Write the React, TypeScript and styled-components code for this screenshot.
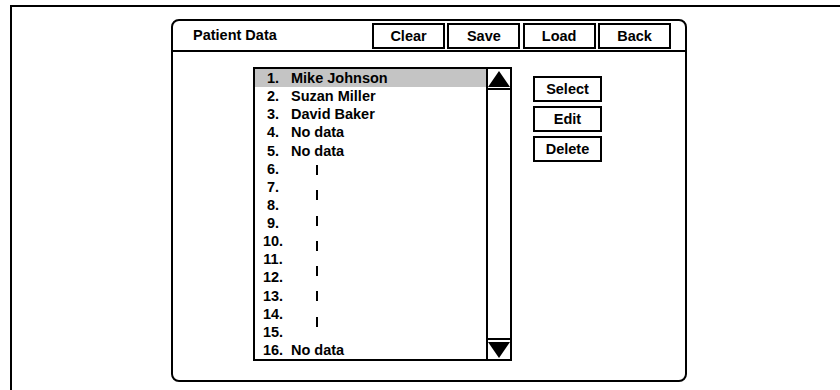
import React from 'react';
import styled, { createGlobalStyle } from 'styled-components';

const GlobalStyle = createGlobalStyle`
  html, body {
    margin: 0;
    padding: 0;
    background: #fff;
    overflow: hidden;
  }
  body {
    font-family: "Liberation Sans", Arial, sans-serif;
    color: #000;
  }
`;

/* outer frame: only top and left lines are visible */
const Frame = styled.div`
  box-sizing: border-box;
  margin: 5px 0 0 10px;
  height: 385px;
  border-top: 2px solid #000;
  border-left: 2px solid #000;
  padding: 12px 0 0 159px;
`;

const Panel = styled.div`
  box-sizing: border-box;
  width: 516px;
  height: 363px;
  border: 2px solid #000;
  border-radius: 8px;
  display: flex;
  flex-direction: column;
`;

const Header = styled.div`
  box-sizing: border-box;
  height: 31px;
  border-bottom: 2px solid #000;
  display: flex;
  align-items: center;
  padding: 0 14px 0 20px;
`;

const Title = styled.div`
  flex: 1;
  font-weight: bold;
  font-size: 14.5px;
  margin-top: -1px;
`;

const ButtonGroup = styled.div`
  display: flex;
  gap: 2.33px;
`;

const Button = styled.button<{ $w: number }>`
  box-sizing: border-box;
  width: ${(p) => p.$w}px;
  height: 26px;
  border: 2px solid #000;
  border-radius: 0;
  background: #fff;
  padding: 0;
  font-family: "Liberation Sans", Arial, sans-serif;
  font-weight: bold;
  font-size: 14.5px;
  color: #000;
`;

const Body = styled.div`
  display: flex;
  align-items: flex-start;
  padding: 15px 0 0 80px;
`;

const List = styled.div`
  box-sizing: border-box;
  position: relative;
  width: 259px;
  height: 294px;
  border: 2px solid #000;
  display: flex;
`;

const Rows = styled.div`
  flex: 1;
  display: flex;
  flex-direction: column;
`;

const Row = styled.div<{ $selected?: boolean }>`
  flex: 1;
  display: flex;
  align-items: center;
  padding-left: 3px;
  font-weight: bold;
  font-size: 14.5px;
  background: ${(p) => (p.$selected ? '#c4c4c4' : 'transparent')};
`;

const Num = styled.span`
  width: 30px;
  text-align: center;
`;

const Name = styled.span`
  margin-left: 3px;
`;

/* dashed continuation mark drawn over the empty rows */
const Continuation = styled.div`
  position: absolute;
  left: 61px;
  top: 96px;
  width: 2px;
  height: 162px;
  background: repeating-linear-gradient(to bottom, #000 0 10px, transparent 10px 25.3px);
`;

const ScrollBar = styled.div`
  box-sizing: border-box;
  width: 24px;
  border-left: 2px solid #000;
  display: flex;
  flex-direction: column;
  justify-content: space-between;
`;

const ArrowBox = styled.div<{ $down?: boolean }>`
  box-sizing: border-box;
  height: 21px;
  display: flex;
  align-items: center;
  justify-content: center;
  ${(p) => (p.$down ? 'border-top: 2px solid #000;' : 'border-bottom: 2px solid #000;')}
`;

const SideButtons = styled.div`
  display: flex;
  flex-direction: column;
  gap: 4px;
  margin: 9px 0 0 21px;
`;

const Arrow = ({ down }: { down?: boolean }) => (
  <svg width="22" height="18" viewBox="0 0 22 18">
    <polygon points={down ? '0,1 22,1 11,17' : '11,1 22,17 0,17'} fill="#000" />
  </svg>
);

const entries: string[] = [
  'Mike Johnson',
  'Suzan Miller',
  'David Baker',
  'No data',
  'No data',
  '', '', '', '', '', '', '', '', '', '',
  'No data',
];

const App = () => {
  return (
    <>
      <GlobalStyle />
      <Frame>
        <Panel>
          <Header>
            <Title>Patient Data</Title>
            <ButtonGroup>
              <Button $w={73}>Clear</Button>
              <Button $w={73}>Save</Button>
              <Button $w={73}>Load</Button>
              <Button $w={73}>Back</Button>
            </ButtonGroup>
          </Header>
          <Body>
            <List>
              <Rows>
                {entries.map((name, i) => (
                  <Row key={i} $selected={i === 0}>
                    <Num>{i + 1}.</Num>
                    <Name>{name}</Name>
                  </Row>
                ))}
              </Rows>
              <Continuation />
              <ScrollBar>
                <ArrowBox>
                  <Arrow />
                </ArrowBox>
                <ArrowBox $down>
                  <Arrow down />
                </ArrowBox>
              </ScrollBar>
            </List>
            <SideButtons>
              <Button $w={69}>Select</Button>
              <Button $w={69}>Edit</Button>
              <Button $w={69}>Delete</Button>
            </SideButtons>
          </Body>
        </Panel>
      </Frame>
    </>
  );
};

export default App;
